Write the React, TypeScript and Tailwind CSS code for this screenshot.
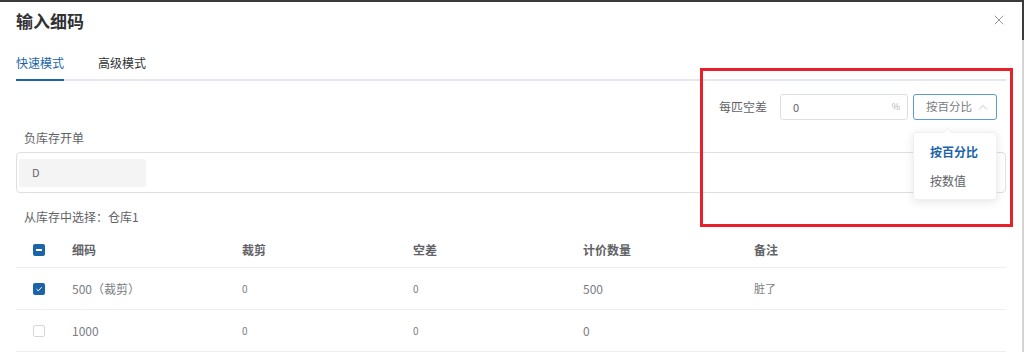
import { X } from "lucide-react";

function Checkbox({ state }: { state: "checked" | "partial" | "empty" }) {
  if (state === "empty") {
    return <span className="block w-[12px] h-[12px] rounded-[2px] border border-[#d4d7de] bg-white" />;
  }
  return (
    <span className="flex w-[12px] h-[12px] rounded-[2px] bg-[#1b64a8] items-center justify-center">
      {state === "partial" ? (
        <span className="block w-[6px] h-[2px] bg-white" />
      ) : (
        <svg width="8" height="8" viewBox="0 0 8 8" fill="none">
          <path d="M1.5 4.2 L3.3 5.8 L6.6 2.2" stroke="white" strokeWidth="1" />
        </svg>
      )}
    </span>
  );
}

const rows = [
  { checked: true, size: "500（裁剪）", cut: "0", gap: "0", qty: "500", note: "脏了" },
  { checked: false, size: "1000", cut: "0", gap: "0", qty: "0", note: "" },
];

export default function App() {
  return (
    <div className="relative w-[1024px] h-[352px] overflow-hidden bg-[#3a3a3a] flex font-['Noto_Sans_CJK_SC',sans-serif]">
      <div className="mt-[2px] w-[1022px] bg-white flex flex-col px-4">
        {/* header */}
        <div className="h-[36px] flex items-center justify-between">
          <h1 className="text-[17px] font-bold text-[#303133] leading-none">输入细码</h1>
          <X className="w-[16px] h-[16px] text-[#8c8f94] -mr-[1px]" strokeWidth={1.4} />
        </div>

        {/* tabs */}
        <div className="mt-[10px] flex border-b-2 border-[#e4e7ed]">
          <div className="-mb-[2px] pt-[6px] pb-[8px] leading-[17px] text-[12px] text-[#1b64a8] border-b-2 border-[#1b64a8]">
            快速模式
          </div>
          <div className="ml-[34px] pt-[6px] pb-[8px] leading-[17px] text-[12px] text-[#303133]">高级模式</div>
        </div>

        {/* tolerance row */}
        <div className="mt-[13px] flex items-center justify-end mr-[9px]">
          <span className="text-[12px] text-[#606266]">每匹空差</span>
          <div className="ml-[13px] w-[128px] h-[26px] border border-[#dcdfe6] rounded-[3px] flex items-center justify-between px-[12px] pr-[7px]">
            <span className="text-[11px] text-[#606266]">0</span>
            <span className="text-[9px] text-[#b0b3b8]">%</span>
          </div>
          <div className="ml-[5px] w-[84px] h-[26px] border border-[#5d9ad1] rounded-[3px] flex items-center justify-between pl-[12px] pr-[8px]">
            <span className="text-[11.5px] text-[#7a7d82]">按百分比</span>
            <svg width="10" height="6" viewBox="0 0 10 6" fill="none">
              <path d="M1 5.5 L5 1.5 L9 5.5" stroke="#c0c4cc" strokeWidth="1" />
            </svg>
          </div>
        </div>

        {/* negative stock */}
        <div className="mt-[9px] pl-[8px] text-[12px] leading-[17px] text-[#606266]">负库存开单</div>
        <div className="mt-[6px] h-[41px] border border-[#dcdfe6] rounded-[4px] flex items-center px-[2px]">
          <div className="w-[127px] h-[28px] bg-[#f4f4f5] rounded-[3px] flex items-center pl-[13px] text-[11px] text-[#606266]">
            D
          </div>
        </div>

        <div className="mt-[15px] pl-[8px] text-[12px] leading-[17px] text-[#606266]">从库存中选择：仓库1</div>

        {/* table */}
        <div className="mt-[7px] flex flex-col">
          <div className="h-[36px] grid grid-cols-[56px_170px_171px_170px_171px_1fr] items-center border-b border-[#ebeef5] text-[12px] font-bold text-[#606266]">
            <div className="pl-[17px]">
              <Checkbox state="partial" />
            </div>
            <div>细码</div>
            <div>裁剪</div>
            <div>空差</div>
            <div>计价数量</div>
            <div>备注</div>
          </div>
          {rows.map((r) => (
            <div
              key={r.size}
              className="h-[42px] grid grid-cols-[56px_170px_171px_170px_171px_1fr] items-center border-b border-[#ebeef5] text-[12px] text-[#7a7d82]"
            >
              <div className="pl-[17px]">
                <Checkbox state={r.checked ? "checked" : "empty"} />
              </div>
              <div>{r.size}</div>
              <div className="text-[10px]">{r.cut}</div>
              <div className="text-[10px]">{r.gap}</div>
              <div>{r.qty}</div>
              <div className="text-[11px]">{r.note}</div>
            </div>
          ))}
        </div>
      </div>
      <div className="w-[2px] flex flex-col">
        <div className="h-[40px] bg-[#3a3a3a]" />
        <div className="flex-1 bg-[#d4d4d4]" />
      </div>

      {/* dropdown */}
      <div className="absolute left-[913px] top-[132px] w-[84px] h-[68px] bg-white rounded-[3px] border border-[#eef0f3] shadow-[0_2px_10px_rgba(0,0,0,0.1)] flex flex-col justify-center pl-[16px] gap-[11px] text-[12px] leading-[18px]">
        <div className="absolute -top-[4px] left-[30px] w-[7px] h-[7px] bg-white border-l border-t border-[#eef0f3] rotate-45" />
        <span className="font-bold text-[#1b64a8]">按百分比</span>
        <span className="text-[#606266]">按数值</span>
      </div>

      {/* highlight */}
      <div className="absolute left-[700px] top-[68px] w-[313px] h-[159px] border-[3px] border-[#e8202a] pointer-events-none" />
    </div>
  );
}
